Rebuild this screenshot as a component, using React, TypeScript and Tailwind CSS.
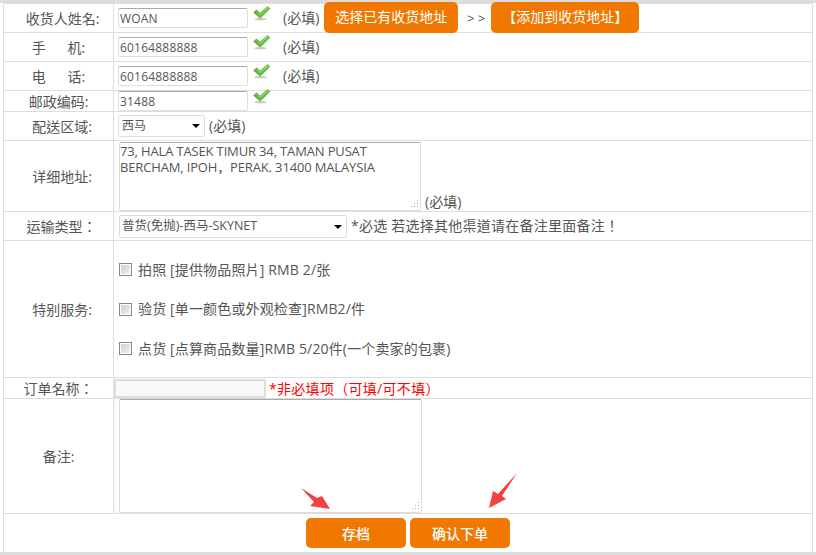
import React from 'react';

const Check: React.FC = () => (
  <svg width="18" height="15" viewBox="0 0 18 15" className="shrink-0">
    <ellipse cx="7.5" cy="13.2" rx="6" ry="1.3" fill="#c9c9c9" />
    <path d="M0.5 6.5 L3.5 3.8 L7 7 L14.5 0.5 L17 2.5 L7.2 12.2 Z" fill="#62bd3a" stroke="#4f9f2c" strokeWidth="0.5" />
    <path d="M3.5 4.6 L7 7.8 L14.5 1.3 L15.5 2 L7 9 Z" fill="#9bde72" />
  </svg>
);

const Required: React.FC = () => <span className="text-[14px] text-[#555]">(必填)</span>;

const TextBox: React.FC<{ value: string }> = ({ value }) => (
  <input
    readOnly
    defaultValue={value}
    className="w-[130px] h-[20px] border border-[#ddd] border-t-[#aaa] rounded-[2px] px-[1px] text-[12px] tracking-[0.2px] text-[#555] bg-white outline-none"
  />
);

const OrangeButton: React.FC<{ w: string; children: React.ReactNode }> = ({ w, children }) => (
  <button className={`${w} bg-[#f07800] text-white rounded-[5px] text-[14px] h-[31px]`}>{children}</button>
);

const Row: React.FC<{ h: string; label: React.ReactNode; children: React.ReactNode }> = ({ h, label, children }) => (
  <tr className={h}>
    <td className="border border-[#ddd] text-center text-[14px] leading-[18px] text-[#555] p-0 pt-[2px] w-[110px]">{label}</td>
    <td className="border border-[#ddd] p-0 text-[14px] leading-[18px] text-[#555]">{children}</td>
  </tr>
);

const Service: React.FC<{ text: string }> = ({ text }) => (
  <label className="flex items-center gap-[6px] pl-[5px] h-[39.5px] text-[14px] tracking-[0.15px] text-[#555]">
    <input type="checkbox" className="appearance-none w-[13px] h-[13px] border border-[#888] bg-gradient-to-br from-[#ccc] to-[#f4f4f4] shadow-[inset_0_0_0_1px_#fff]" />
    <span>{text}</span>
  </label>
);

// dotted grip in the corner of the text areas
const Grip: React.FC = () => (
  <svg className="absolute right-[2px] bottom-[3px]" width="8" height="8" viewBox="0 0 8 8" fill="#aaa">
    <rect x="6" y="0" width="1" height="1" />
    <rect x="3" y="3" width="1" height="1" />
    <rect x="6" y="3" width="1" height="1" />
    <rect x="0" y="6" width="1" height="1" />
    <rect x="3" y="6" width="1" height="1" />
    <rect x="6" y="6" width="1" height="1" />
  </svg>
);

const App: React.FC = () => {
  return (
    <div className="relative w-[816px] h-[555px] bg-white overflow-hidden" style={{ fontFamily: '"Open Sans", "Noto Sans CJK TC", sans-serif' }}>
      <div className="h-[3px] bg-[#ddd]" />
      <table className="ml-[3px] w-[810px] border-collapse table-fixed">
        <tbody>
          <Row h="h-[29px]" label={<span className="ml-[8px]">收货人姓名:</span>}>
            <div className="flex items-center pl-[4px] h-[28px]">
              <TextBox value="WOAN" />
              <span className="ml-[5px] -mt-[9px]"><Check /></span>
              <span className="ml-[12px]"><Required /></span>
              <span className="ml-[5px] -mt-[2px]"><OrangeButton w="w-[134px]">选择已有收货地址</OrangeButton></span>
              <span className="ml-[9px] mr-[6px] text-[13px] whitespace-pre w-[18px]">&gt; &gt;</span>
              <span className="-mt-[2px]"><OrangeButton w="w-[148px]">【添加到收货地址】</OrangeButton></span>
            </div>
          </Row>
          <Row h="h-[29px]" label={<span className="whitespace-pre">手{'      '}机:</span>}>
            <div className="flex items-center pl-[4px]">
              <TextBox value="60164888888" />
              <span className="ml-[5px] -mt-[9px]"><Check /></span>
              <span className="ml-[12px]"><Required /></span>
            </div>
          </Row>
          <Row h="h-[29px]" label={<span className="whitespace-pre">电{'      '}话:</span>}>
            <div className="flex items-center pl-[4px]">
              <TextBox value="60164888888" />
              <span className="ml-[5px] -mt-[9px]"><Check /></span>
              <span className="ml-[12px]"><Required /></span>
            </div>
          </Row>
          <Row h="h-[21px]" label="邮政编码:">
            <div className="flex items-center pl-[4px]">
              <TextBox value="31488" />
              <span className="ml-[5px] -mt-[9px]"><Check /></span>
            </div>
          </Row>
          <Row h="h-[29px]" label={<span className="ml-[7px]">配送区域:</span>}>
            <div className="flex items-center pl-[4px]">
              <div className="relative w-[87px] h-[22px]">
                <select className="appearance-none w-full h-full border border-[#ddd] rounded-[2px] pl-[3px] text-[12px] text-[#555] bg-white outline-none">
                  <option>西马</option>
                </select>
                <span className="absolute right-[5px] top-[9px] w-0 h-0 border-x-[4px] border-x-transparent border-t-[4px] border-t-black" />
              </div>
              <span className="ml-[4px]"><Required /></span>
            </div>
          </Row>
          <Row h="h-[71px]" label={<span className="ml-[7px]">详细地址:</span>}>
            <div className="flex items-end pl-[5px] h-[70px]">
              <div className="relative w-[302px] h-[69px]">
                <textarea
                  readOnly
                  defaultValue={'73, HALA TASEK TIMUR 34, TAMAN PUSAT\nBERCHAM, IPOH，PERAK. 31400 MALAYSIA'}
                  className="w-full h-full resize-none border border-[#ddd] border-t-[#aaa] rounded-[2px] px-0 text-[13px] tracking-[-0.15px] leading-[16px] text-[#555] outline-none font-['Open_Sans','Noto_Sans_CJK_SC',sans-serif]"
                />
                <Grip />
              </div>
              <span className="ml-[4px]"><Required /></span>
            </div>
          </Row>
          <Row h="h-[29px]" label={<span className="ml-[6px]">运输类型：</span>}>
            <div className="flex items-center pl-[5px]">
              <div className="relative w-[228px] h-[23px]">
                <select className="appearance-none w-full h-full border border-[#ddd] rounded-[2px] pl-[2px] text-[12.5px] text-[#555] bg-white outline-none">
                  <option>普货(免抛)-西马-SKYNET</option>
                </select>
                <span className="absolute right-[5px] top-[10px] w-0 h-0 border-x-[4px] border-x-transparent border-t-[4px] border-t-black" />
              </div>
              <span className="ml-[4px] tracking-[0.25px]">*必选 若选择其他渠道请在备注里面备注！</span>
            </div>
          </Row>
          <Row h="h-[137px]" label={<span className="ml-[7px]">特别服务:</span>}>
            <div className="flex flex-col">
              <Service text="拍照 [提供物品照片] RMB 2/张" />
              <Service text="验货 [单一颜色或外观检查]RMB2/件" />
              <Service text="点货 [点算商品数量]RMB 5/20件(一个卖家的包裹)" />
            </div>
          </Row>
          <Row h="h-[21px]" label="订单名称：">
            <div className="flex items-center">
              <input readOnly className="w-[152px] h-[19px] border-2 border-[#ddd] bg-[#f8f8f8] outline-none" />
              <span className="ml-[3px] pt-[1px] text-[#f00] tracking-[0.3px]">*非必填项（可填/可不填）</span>
            </div>
          </Row>
          <Row h="h-[115px]" label="备注:">
            <div className="flex pl-[5px] h-[114px]">
              <div className="relative w-[303px] h-[114px]">
                <textarea readOnly className="w-full h-full resize-none border border-[#ddd] border-t-[#aaa] rounded-[2px] outline-none" />
                <Grip />
              </div>
            </div>
          </Row>
          <tr className="h-[39px]">
            <td colSpan={2} className="border border-[#ddd] border-b-0 p-0">
              <div className="flex justify-center gap-[4px]">
                <button className="w-[100px] h-[30px] bg-[#f07800] text-white text-[14px] font-medium rounded-[5px]">存档</button>
                <button className="w-[100px] h-[30px] bg-[#f07800] text-white text-[14px] font-medium rounded-[5px]">确认下单</button>
              </div>
            </td>
          </tr>
        </tbody>
      </table>
      <div className="absolute left-0 right-0 top-[552px] h-[3px] bg-[#ddd]" />
      <svg className="absolute left-[296px] top-[480px]" width="40" height="34" viewBox="0 0 40 34">
        <path d="M5 8 L21 18 L26 16 L34 29 L14 26 L18 22 Z" fill="#f44040" />
      </svg>
      <svg className="absolute left-[484px] top-[468px]" width="36" height="44" viewBox="0 0 36 44">
        <path d="M33 5 L14 26 L9 23 L5 40 L22 31 L18 28 Z" fill="#f44040" />
      </svg>
    </div>
  );
};

export default App;
